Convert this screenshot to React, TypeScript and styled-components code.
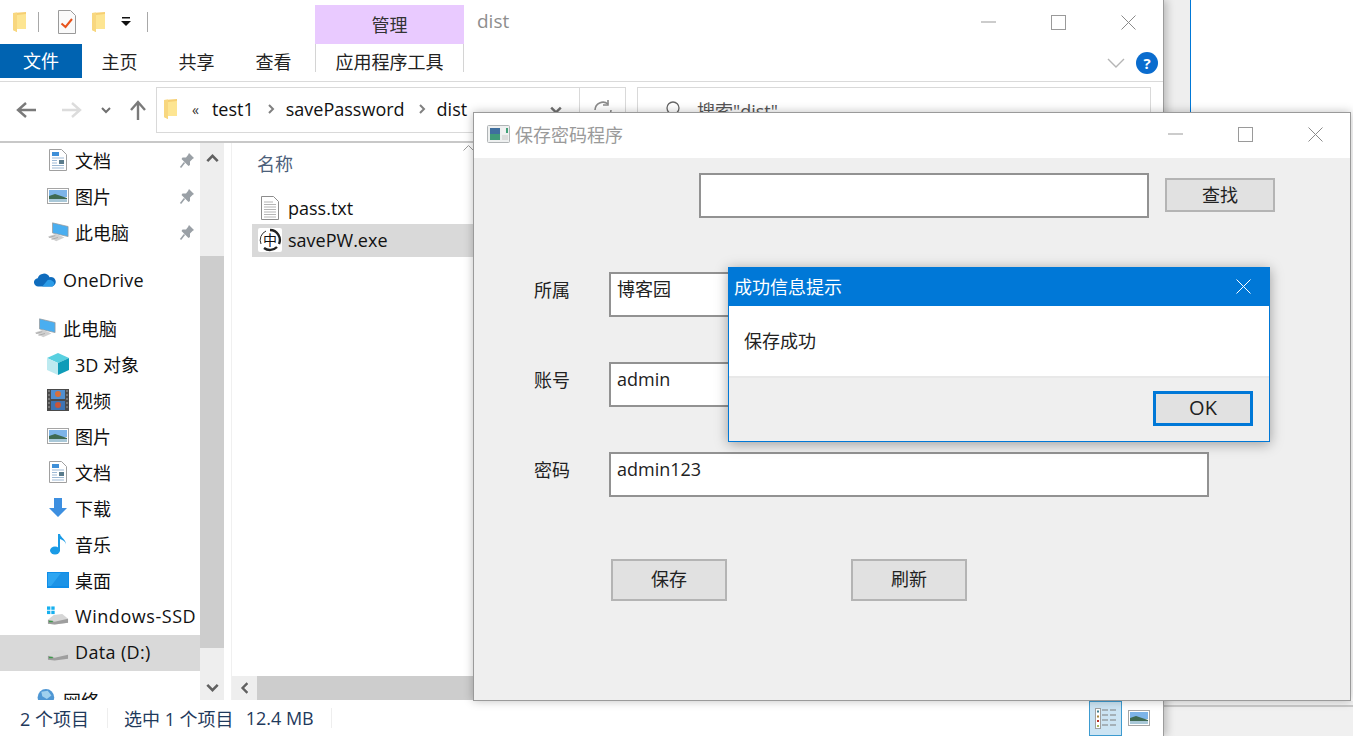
import styled, { createGlobalStyle } from "styled-components"
import type { ReactNode } from "react"

const GlobalStyle = createGlobalStyle`
  html, body {
    margin: 0;
    padding: 0;
    background: #fff;
    overflow: hidden;
  }
  * {
    box-sizing: border-box;
  }
  body {
    font-family: "Open Sans", "Noto Sans CJK SC", sans-serif;
    font-size: 18px;
    color: #111;
  }
`

const Desktop = styled.div`
  position: relative;
  width: 1353px;
  height: 736px;
  overflow: hidden;
  background: #fff;
`

/* windows on the desktop */
const BackWindow = styled.div`
  position: absolute;
  left: 1164px;
  top: 0;
  width: 189px;
  height: 736px;
  display: flex;
  flex-direction: column;
`

const BackTop = styled.div`
  height: 701px;
  display: flex;
`

const BackStrip = styled.div`
  width: 27px;
  background: #eeeeee;
  border-right: 1px solid #0078d7;
`

const BackGap = styled.div`
  height: 4px;
  background: #f3f3f3;
`

const BackBottom = styled.div`
  flex: 1;
  background: #f0f0f0;
  border-top: 2px solid #c9c9c9;
`

const Explorer = styled.div`
  position: absolute;
  left: 0;
  top: 0;
  width: 1164px;
  height: 736px;
  background: #fff;
  border-right: 1px solid #9c9c9c;
  box-shadow: 3px 0 8px rgba(0, 0, 0, 0.22);
  display: flex;
  flex-direction: column;
`

const TitleBar = styled.div`
  height: 44px;
  flex: none;
  display: flex;
  align-items: flex-end;
  padding-left: 12px;
`

const QuickAccess = styled.div`
  width: 303px;
  height: 44px;
  display: flex;
  align-items: center;
  padding-bottom: 1px;
`

const QuickSep = styled.div<{ $m: string }>`
  width: 1px;
  height: 20px;
  background: #a8a8a8;
  margin: ${(p) => p.$m};
`

const QuickSlot = styled.span<{ $ml: number }>`
  margin-left: ${(p) => p.$ml}px;
  display: inline-flex;
`

const ContextTab = styled.div`
  width: 149px;
  height: 39px;
  background: #e9caff;
  text-align: center;
  line-height: 40px;
  color: #333;
`

const TitleText = styled.div`
  align-self: center;
  margin-left: 13px;
  color: #8e8e8e;
  font-size: 19px;
  padding-bottom: 2px;
`

const WindowButtons = styled.div`
  margin-left: auto;
  align-self: center;
  display: flex;
  gap: 55px;
  padding-right: 27px;
  align-items: center;
`

const RibbonTabs = styled.div`
  height: 38px;
  flex: none;
  border-bottom: 1px solid #dadada;
  display: flex;
  align-items: flex-start;
`

const FileTab = styled.div`
  width: 82px;
  height: 34px;
  background: #0063b1;
  color: #fff;
  text-align: center;
  line-height: 34px;
`

const RibbonTab = styled.div`
  height: 34px;
  width: 77px;
  padding-right: 2px;
  text-align: center;
  line-height: 36px;
  color: #222;
`

const ToolTab = styled.div`
  width: 149px;
  height: 28px;
  margin-left: 2px;
  text-align: center;
  line-height: 36px;
  color: #222;
  border-left: 1px solid #d4d4d4;
  border-right: 1px solid #d4d4d4;
`

const RibbonRight = styled.div`
  margin-left: auto;
  display: flex;
  align-items: center;
  gap: 11px;
  height: 36px;
  padding-right: 5px;
  padding-top: 1px;
`

const HelpBadge = styled.div`
  width: 22px;
  height: 22px;
  border-radius: 50%;
  background: #0a6cce;
  color: #fff;
  font-size: 15px;
  font-weight: 700;
  text-align: center;
  line-height: 22px;
`

const NavBar = styled.div`
  height: 61px;
  flex: none;
  display: flex;
  align-items: flex-start;
  padding-top: 5px;
  border-bottom: 2px solid #c8c8c8;
`

const NavArrows = styled.div`
  width: 156px;
  height: 46px;
  display: flex;
  align-items: center;
  padding-left: 16px;
`

const NavSlot = styled.div<{ $w: number }>`
  width: ${(p) => p.$w}px;
  flex: none;
  display: flex;
  align-items: center;
`

const AddressBox = styled.div`
  width: 470px;
  height: 46px;
  border: 1px solid #d9d9d9;
  display: flex;
  align-items: center;
  padding-left: 6px;
  padding-bottom: 2px;
`

const Crumb = styled.span`
  color: #111;
  font-size: 18px;
  margin-right: 12px;
`

const CrumbRoot = styled.span`
  color: #333;
  font-size: 14px;
  margin: 0 13px 0 14px;
`

const CrumbArrow = styled.span`
  margin-right: 10px;
  display: inline-flex;
`

const AddressChevron = styled.span`
  margin-left: auto;
  width: 46px;
  display: inline-flex;
  justify-content: center;
  padding-top: 2px;
`

const RefreshSlot = styled.span`
  border-left: 1px solid #d9d9d9;
  height: 44px;
  margin-bottom: -2px;
  width: 46px;
  display: flex;
  align-items: center;
  justify-content: center;
`

const SearchBox = styled.div`
  margin-left: 11px;
  width: 514px;
  height: 46px;
  border: 1px solid #d9d9d9;
  display: flex;
  align-items: center;
  padding-left: 26px;
  gap: 13px;
  color: #555;
`

const Main = styled.div`
  flex: 1;
  display: flex;
  min-height: 0;
`

const Sidebar = styled.div`
  width: 200px;
  flex: none;
  overflow: hidden;
`

const NavGroup = styled.div`
  margin-bottom: 12px;
`

const NavItem = styled.div<{ $level?: number; $active?: boolean }>`
  height: 36px;
  display: flex;
  align-items: center;
  white-space: nowrap;
  padding-left: ${(p) => (p.$level === 1 ? 34 : 47)}px;
  padding-bottom: 2px;
  background: ${(p) => (p.$active ? "#d9d9d9" : "transparent")};
  position: relative;
`

const NavIcon = styled.span<{ $level?: number }>`
  width: 22px;
  margin-right: ${(p) => (p.$level === 1 ? 7 : 6)}px;
  display: inline-flex;
  flex: none;
  align-items: center;
  justify-content: center;
`

const NavLabel = styled.span<{ $track?: number }>`
  letter-spacing: ${(p) => p.$track ?? 0}px;
`

const NavPin = styled.span`
  position: absolute;
  left: 179px;
  top: 9px;
  display: inline-flex;
`

const VScroll = styled.div`
  width: 24px;
  flex: none;
  background: #eeeeee;
  display: flex;
  flex-direction: column;
`

const ScrollArrow = styled.div`
  height: 113px;
  display: flex;
  justify-content: center;
  align-items: flex-start;
  padding-top: 9px;
`

const ScrollThumb = styled.div`
  height: 392px;
  background: #cdcdcd;
`

const ScrollArrowDown = styled.div`
  flex: 1;
  display: flex;
  justify-content: center;
  align-items: flex-end;
  padding-bottom: 6px;
`

const PaneGap = styled.div`
  width: 8px;
  flex: none;
  border-right: 1px solid #f0f0f0;
  border-left: 3px solid #fff;
`

const FilePane = styled.div`
  flex: 1;
  display: flex;
  flex-direction: column;
  position: relative;
`

const SortCaret = styled.span`
  position: absolute;
  left: 231px;
  top: 2px;
  display: inline-flex;
`

const ColumnHeader = styled.div`
  height: 41px;
  padding: 7px 0 0 25px;
  color: #4c607a;
`

const FileList = styled.div`
  flex: 1;
  padding: 8px 0 0 20px;
`

const FileRow = styled.div<{ $selected?: boolean }>`
  height: ${(p) => (p.$selected ? 33 : 32)}px;
  display: flex;
  align-items: center;
  padding-left: 6px;
  padding-bottom: ${(p) => (p.$selected ? 1 : 0)}px;
  gap: 6px;
  background: ${(p) => (p.$selected ? "#d9d9d9" : "transparent")};
`

const FileIcon = styled.span`
  width: 24px;
  display: inline-flex;
  justify-content: center;
`

const HScroll = styled.div`
  height: 24px;
  background: #cdcdcd;
  display: flex;
  flex: none;
`

const HArrow = styled.div`
  width: 25px;
  background: #eeeeee;
  display: flex;
  align-items: center;
  justify-content: center;
`

const StatusBar = styled.div`
  height: 36px;
  flex: none;
  display: flex;
  align-items: center;
  font-size: 18px;
  color: #1f3a5c;
  padding-left: 20px;
`

const StatusSep = styled.div<{ $m: string }>`
  width: 1px;
  height: 20px;
  background: #eeeeee;
  margin: ${(p) => p.$m};
`

const StatusSize = styled.span`
  margin-left: 12px;
`

const ViewButtons = styled.div`
  margin-left: auto;
  display: flex;
  align-items: center;
  padding-right: 13px;
  gap: 6px;
`

const ViewButton = styled.div<{ $on?: boolean }>`
  width: ${(p) => (p.$on ? 33 : 22)}px;
  height: 35px;
  display: flex;
  align-items: center;
  justify-content: center;
  background: ${(p) => (p.$on ? "#cce4f3" : "transparent")};
  border: ${(p) => (p.$on ? "1px solid #3d9bd0" : "none")};
`

/* the small python program */
const AppWindow = styled.div`
  position: absolute;
  left: 473px;
  top: 112px;
  width: 878px;
  height: 589px;
  background: #efefef;
  border: 1px solid #9a9a9a;
  box-shadow: 0 0 9px rgba(0, 0, 0, 0.25);
  display: flex;
  flex-direction: column;
`

const AppTitleBar = styled.div`
  height: 45px;
  flex: none;
  background: #fff;
  display: flex;
  align-items: center;
  padding: 0 0 3px 13px;
  color: #9a9a9a;
  gap: 5px;
`

const AppButtons = styled.div`
  margin-left: auto;
  display: flex;
  align-items: center;
  gap: 55px;
  padding-right: 27px;
`

const AppBody = styled.div`
  flex: 1;
  display: flex;
  flex-direction: column;
  padding-top: 15px;
`

const SearchRow = styled.div`
  display: flex;
  align-items: center;
  padding-left: 225px;
  gap: 16px;
  margin-bottom: 54px;
`

const TextBox = styled.div<{ $w: number }>`
  width: ${(p) => p.$w}px;
  height: 45px;
  background: #fff;
  border: 2px solid #929292;
  padding: 3px 6px;
  font-size: 18px;
  color: #222;
  line-height: 24px;
`

const Button = styled.div<{ $w: number; $h: number }>`
  width: ${(p) => p.$w}px;
  height: ${(p) => p.$h}px;
  background: #e1e1e1;
  border: 2px solid #b4b4b4;
  display: flex;
  align-items: center;
  justify-content: center;
  padding-bottom: 4px;
  font-size: 18px;
  color: #222;
`

const SearchButton = styled(Button)`
  margin-top: -1px;
  padding-bottom: 3px;
`

const FieldRow = styled.div`
  display: flex;
  align-items: flex-start;
  padding-left: 60px;
  margin-bottom: 45px;
`

const FieldLabel = styled.div`
  width: 75px;
  font-size: 18px;
  line-height: 24px;
  padding-top: 6px;
  color: #222;
`

const ActionRow = styled.div`
  display: flex;
  padding-left: 137px;
  padding-top: 17px;
  gap: 124px;
`

/* message box on top */
const Dialog = styled.div`
  position: absolute;
  left: 728px;
  top: 267px;
  width: 542px;
  height: 175px;
  background: #fff;
  border: 1px solid #0078d7;
  box-shadow: 0 2px 12px rgba(0, 0, 0, 0.35);
  display: flex;
  flex-direction: column;
`

const DialogTitle = styled.div`
  height: 38px;
  flex: none;
  background: #0078d7;
  color: #fff;
  display: flex;
  align-items: center;
  justify-content: space-between;
  padding: 0 18px 2px 5px;
`

const DialogBody = styled.div`
  height: 72px;
  flex: none;
  padding: 23px 0 0 15px;
  font-size: 18px;
  line-height: 24px;
  color: #222;
  border-bottom: 2px solid #e8e8e8;
`

const DialogFooter = styled.div`
  flex: 1;
  background: #efefef;
  display: flex;
  justify-content: flex-end;
  align-items: flex-start;
  padding: 13px 16px 0 0;
`

const OkButton = styled.div`
  width: 100px;
  height: 35px;
  background: #e1e1e1;
  border: 3px solid #0078d7;
  display: flex;
  align-items: center;
  justify-content: center;
  padding-bottom: 2px;
  font-size: 20px;
  color: #222;
`

const Turned = styled.svg<{ $rot: number }>`
  transform: rotate(${(p) => p.$rot}deg);
`

/* drawings */
const FolderIcon = () => (
  <svg width="15" height="22" viewBox="0 0 15 22">
    <path d="M1 2 L14 1 V18 L5 18 L5 21 L1 19 Z" fill="#f6cf72" />
    <path d="M5 4 L14 3 V18 L5 18 Z" fill="#fde592" />
    <path d="M1 2 L5 1.5 V21 L1 19 Z" fill="#f8d77f" />
  </svg>
)

const CheckDocIcon = () => (
  <svg width="18" height="24" viewBox="0 0 18 24">
    <path d="M.5.5h12l5 5v18H.5z" fill="#fafafa" stroke="#9a9a9a" />
    <path d="M3.5 13.5 L7.5 17 L14 9" fill="none" stroke="#e8541c" strokeWidth="2" />
  </svg>
)

const MiniArrow = () => (
  <svg width="10" height="10" viewBox="0 0 10 10">
    <rect x="1" y="0" width="8" height="1.5" fill="#111" />
    <path d="M0 4h10L5 9z" fill="#111" />
  </svg>
)

const MinIcon = () => (
  <svg width="15" height="2" viewBox="0 0 15 2">
    <rect width="15" height="1" y="0.5" fill="#9a9a9a" />
  </svg>
)

const MaxIcon = () => (
  <svg width="15" height="15" viewBox="0 0 15 15">
    <rect x="0.5" y="0.5" width="14" height="14" fill="none" stroke="#9a9a9a" />
  </svg>
)

const CloseIcon = ({ color = "#8a8a8a" }: { color?: string }) => (
  <svg width="15" height="15" viewBox="0 0 15 15">
    <path d="M.5.5l14 14M14.5.5l-14 14" stroke={color} strokeWidth="1" fill="none" />
  </svg>
)

const NavArrow = ({ dir, color }: { dir: "left" | "right" | "up"; color: string }) => {
  const rot = dir === "left" ? 180 : dir === "up" ? -90 : 0
  return (
    <Turned $rot={rot} width="20" height="20" viewBox="0 0 20 20">
      <path d="M0 10h18M10 3l8 7-8 7" fill="none" stroke={color} strokeWidth="2.4" />
    </Turned>
  )
}

const SmallChevron = ({ dir = "down", color = "#707070", size = 10 }: { dir?: "down" | "up" | "left" | "right"; color?: string; size?: number }) => {
  const rot = { down: 0, up: 180, left: 90, right: -90 }[dir]
  return (
    <Turned $rot={rot} width={size} height={size} viewBox="0 0 10 10">
      <path d="M1 3l4 4 4-4" fill="none" stroke={color} strokeWidth="2" />
    </Turned>
  )
}

const WideChevron = () => (
  <svg width="18" height="10" viewBox="0 0 18 10">
    <path d="M1 1l8 8 8-8" fill="none" stroke="#b5b5b5" strokeWidth="1.4" />
  </svg>
)

const ThinCaret = () => (
  <svg width="11" height="6" viewBox="0 0 11 6">
    <path d="M.5 5.5l5-5 5 5" fill="none" stroke="#9a9a9a" />
  </svg>
)

const RefreshIcon = () => (
  <svg width="22" height="22" viewBox="0 0 22 22">
    <path d="M3 11a8 8 0 0 1 13-6M19 11a8 8 0 0 1-13 6" fill="none" stroke="#8a8a8a" strokeWidth="1.6" />
    <path d="M16 1v5h-5M6 21v-5h5" fill="none" stroke="#8a8a8a" strokeWidth="1.6" />
  </svg>
)

const SearchGlass = () => (
  <svg width="20" height="20" viewBox="0 0 20 20">
    <circle cx="9" cy="8" r="6" fill="none" stroke="#666" strokeWidth="1.3" />
    <path d="M13 13l5 5" stroke="#666" strokeWidth="1.5" />
  </svg>
)

const DocIcon = () => (
  <svg width="18" height="22" viewBox="0 0 18 22">
    <path d="M.5.5h12l5 5v16H.5z" fill="#fff" stroke="#a0a0a0" />
    <rect x="3" y="3" width="7" height="4" fill="#3e8fd8" />
    <path d="M3 9h12M3 11.5h5M3 14h5M3 16.5h12M3 19h12" stroke="#9db9d5" />
    <rect x="10" y="11" width="5" height="4" fill="#5a7c8c" />
  </svg>
)

const PictureIcon = () => (
  <svg width="22" height="16" viewBox="0 0 22 16">
    <rect x="0.5" y="0.5" width="21" height="15" fill="#fff" stroke="#a5a5a5" />
    <rect x="2" y="2" width="18" height="7" fill="#7db4e8" />
    <path d="M2 8l6-2 12 4v4H2z" fill="#3f6a52" />
    <rect x="2" y="11" width="18" height="3" fill="#a9c8d8" />
  </svg>
)

const PcIcon = () => (
  <svg width="24" height="22" viewBox="0 0 24 22">
    <path d="M6 1l17 4v11L6 12z" fill="#4aaef0" stroke="#9a9a9a" strokeWidth="0.8" />
    <path d="M1 16l9-3 9 4-9 4z" fill="#d0d0d0" />
    <path d="M2 17l7-2M5 19l7-2" stroke="#a8a8a8" />
  </svg>
)

const CloudIcon = () => (
  <svg width="24" height="16" viewBox="0 0 24 16">
    <path d="M5 15a4.5 4.5 0 0 1-1-9 7 7 0 0 1 13-1 5 5 0 0 1 3 10z" fill="#0f6cbd" />
    <path d="M9 15l6-7a5 5 0 0 1 5 1 3.2 3.2 0 0 1 0 6z" fill="#2b9ce8" />
  </svg>
)

const CubeIcon = () => (
  <svg width="22" height="22" viewBox="0 0 22 22">
    <path d="M11 0l11 5-11 5L0 5z" fill="#58d0e0" />
    <path d="M0 5l11 5v12L0 17z" fill="#bdeaf0" />
    <path d="M22 5l-11 5v12l11-5z" fill="#0f9cb8" />
  </svg>
)

const FilmIcon = () => (
  <svg width="22" height="22" viewBox="0 0 22 22">
    <rect width="22" height="22" fill="#4a4a4a" />
    <rect x="4" y="1" width="14" height="9" fill="#4f8fd0" />
    <rect x="4" y="12" width="14" height="9" fill="#3d74b4" />
    <circle cx="11" cy="5" r="3" fill="#d8703a" />
    <circle cx="11" cy="16" r="3" fill="#c9563a" />
    <path d="M1.5 2h1M1.5 6h1M1.5 10h1M1.5 14h1M1.5 18h1M19.5 2h1M19.5 6h1M19.5 10h1M19.5 14h1M19.5 18h1" stroke="#fff" />
  </svg>
)

const DownloadIcon = () => (
  <svg width="20" height="20" viewBox="0 0 20 20">
    <path d="M6 0h8v10h5l-9 9-9-9h5z" fill="#3d8fe0" />
  </svg>
)

const MusicIcon = () => (
  <svg width="18" height="22" viewBox="0 0 18 22">
    <ellipse cx="6" cy="17.5" rx="5" ry="4" fill="#1a9be6" />
    <path d="M9 18V1h2c1 4 6 5 6 11 0-3-3-5-6-6v12z" fill="#1a9be6" />
  </svg>
)

const DesktopIcon = () => (
  <svg width="22" height="16" viewBox="0 0 22 16">
    <rect width="22" height="16" fill="#0f8de8" />
    <rect x="1" y="1" width="20" height="13" fill="#2ea6f2" />
    <path d="M14 1l-10 13h17V1z" fill="#1c93e6" />
  </svg>
)

const DriveIcon = ({ win }: { win?: boolean }) => (
  <svg width="23" height="20" viewBox="0 0 23 20">
    {win && (
      <g fill="#17b0ef">
        <rect x="0" y="0" width="3.5" height="3.5" />
        <rect x="4.5" y="0" width="3.5" height="3.5" />
        <rect x="0" y="4.5" width="3.5" height="3.5" />
        <rect x="4.5" y="4.5" width="3.5" height="3.5" />
      </g>
    )}
    <path d="M1 14l6-5 9-1 6 5v4l-14 2-7-1z" fill="#d6d6d6" />
    <path d="M1 14l7 2 14-3v4l-14 2-7-1z" fill="#9e9e9e" />
    <rect x="2" y="15" width="4" height="1.5" fill="#3d9a4a" />
  </svg>
)

const GlobeIcon = () => (
  <svg width="24" height="24" viewBox="0 0 24 24">
    <circle cx="13" cy="9" r="9" fill="#4f97d4" />
    <path d="M8 3l7-1 4 5-5 4-5-3z" fill="#9fd0ee" />
    <path d="M1 15l9-3 9 4-9 4z" fill="#d0d0d0" />
  </svg>
)

const PinIcon = () => (
  <svg width="16" height="17" viewBox="0 0 16 17">
    <path d="M10 1l5 5-1.5 1L11 9.5V13l-1.5 1-7-7 1-1.5H7L9 3z" fill="#9aa0a6" />
    <path d="M5.5 10.5l-4 5" stroke="#9aa0a6" strokeWidth="1.6" />
  </svg>
)

const TxtIcon = () => (
  <svg width="18" height="24" viewBox="0 0 18 24">
    <path d="M.5.5h12l5 5v18H.5z" fill="#fff" stroke="#8d8d8d" />
    <path d="M3 6h9M3 8.5h12M3 11h12M3 13.5h12M3 16h12M3 18.5h12M3 21h12" stroke="#b5b5b5" />
  </svg>
)

const ExeGlyph = styled.text`
  font-family: "Noto Sans CJK SC", sans-serif;
  font-size: 14px;
  fill: #111;
`

const ExeIcon = () => (
  <svg width="24" height="24" viewBox="0 0 24 24">
    <rect width="24" height="24" rx="2" fill="#fff" />
    <path d="M12 2a10 10 0 0 1 9 14M19 19a10 10 0 0 1-13 1" fill="none" stroke="#222" strokeWidth="2.4" />
    <path d="M3 16a10 10 0 0 1 5-13" fill="none" stroke="#333" strokeWidth="1" />
    <ExeGlyph x="5" y="17">中</ExeGlyph>
  </svg>
)

const AppIcon = () => (
  <svg width="23" height="18" viewBox="0 0 23 18">
    <rect x="0.5" y="0.5" width="22" height="17" rx="1" fill="#eef0f0" stroke="#b0b4b6" />
    <rect x="3" y="3" width="10" height="12" fill="#3f9a78" />
    <rect x="3" y="3" width="10" height="6" fill="#3f6f9e" />
    <rect x="15" y="3" width="3" height="6" fill="#f2f2f2" />
    <rect x="19" y="3" width="2" height="5" fill="#42a078" />
    <rect x="15" y="10" width="6" height="5" fill="#dcdcdc" />
  </svg>
)

const DetailsIcon = () => (
  <svg width="21" height="21" viewBox="0 0 21 21">
    <rect x="0.5" y="0.5" width="5" height="20" fill="#fff" stroke="#a0a0a0" />
    <rect x="2" y="2.5" width="2" height="2" fill="#41808f" />
    <rect x="2" y="7.5" width="2" height="2" fill="#a8863f" />
    <rect x="2" y="12" width="2" height="2" fill="#b83228" />
    <rect x="2" y="17" width="2" height="2" fill="#a8b860" />
    <path d="M7 2h6M15 2h6M7 7h6M15 7h6M7 12h6M15 12h6M7 17h6M15 17h6" stroke="#7f7f7f" strokeWidth="1.2" />
  </svg>
)

interface SideEntry {
  label: string
  icon: ReactNode
  level?: number
  pinned?: boolean
  active?: boolean
  track?: number
}

const quickLinks: SideEntry[] = [
  { label: "文档", icon: <DocIcon />, pinned: true },
  { label: "图片", icon: <PictureIcon />, pinned: true },
  { label: "此电脑", icon: <PcIcon />, pinned: true },
]

const computerLinks: SideEntry[] = [
  { label: "此电脑", icon: <PcIcon />, level: 1 },
  { label: "3D 对象", icon: <CubeIcon /> },
  { label: "视频", icon: <FilmIcon /> },
  { label: "图片", icon: <PictureIcon /> },
  { label: "文档", icon: <DocIcon /> },
  { label: "下载", icon: <DownloadIcon /> },
  { label: "音乐", icon: <MusicIcon /> },
  { label: "桌面", icon: <DesktopIcon /> },
  { label: "Windows-SSD", icon: <DriveIcon win />, track: 0.55 },
  { label: "Data (D:)", icon: <DriveIcon />, active: true, track: 0.35 },
]

const SideRow = ({ item }: { item: SideEntry }) => (
  <NavItem $level={item.level} $active={item.active}>
    <NavIcon $level={item.level}>{item.icon}</NavIcon>
    <NavLabel $track={item.track}>{item.label}</NavLabel>
    {item.pinned && (
      <NavPin>
        <PinIcon />
      </NavPin>
    )}
  </NavItem>
)

export default function App() {
  return (
    <Desktop>
      <GlobalStyle />
      <BackWindow>
        <BackTop>
          <BackStrip />
        </BackTop>
        <BackGap />
        <BackBottom />
      </BackWindow>

      <Explorer>
        <TitleBar>
          <QuickAccess>
            <FolderIcon />
            <QuickSep $m="0 0 0 11px" />
            <QuickSlot $ml={19}>
              <CheckDocIcon />
            </QuickSlot>
            <QuickSlot $ml={15}>
              <FolderIcon />
            </QuickSlot>
            <QuickSlot $ml={15}>
              <MiniArrow />
            </QuickSlot>
            <QuickSep $m="0 0 0 16px" />
          </QuickAccess>
          <ContextTab>管理</ContextTab>
          <TitleText>dist</TitleText>
          <WindowButtons>
            <MinIcon />
            <MaxIcon />
            <CloseIcon />
          </WindowButtons>
        </TitleBar>

        <RibbonTabs>
          <FileTab>文件</FileTab>
          <RibbonTab>主页</RibbonTab>
          <RibbonTab>共享</RibbonTab>
          <RibbonTab>查看</RibbonTab>
          <ToolTab>应用程序工具</ToolTab>
          <RibbonRight>
            <WideChevron />
            <HelpBadge>?</HelpBadge>
          </RibbonRight>
        </RibbonTabs>

        <NavBar>
          <NavArrows>
            <NavSlot $w={46}>
              <NavArrow dir="left" color="#7a7a7a" />
            </NavSlot>
            <NavSlot $w={39}>
              <NavArrow dir="right" color="#dcdcdc" />
            </NavSlot>
            <NavSlot $w={27}>
              <SmallChevron />
            </NavSlot>
            <NavSlot $w={20}>
              <NavArrow dir="up" color="#7a7a7a" />
            </NavSlot>
          </NavArrows>
          <AddressBox>
            <FolderIcon />
            <CrumbRoot>«</CrumbRoot>
            <Crumb>test1</Crumb>
            <CrumbArrow>
              <SmallChevron dir="right" color="#808080" />
            </CrumbArrow>
            <Crumb>savePassword</Crumb>
            <CrumbArrow>
              <SmallChevron dir="right" color="#808080" />
            </CrumbArrow>
            <Crumb>dist</Crumb>
            <AddressChevron>
              <SmallChevron size={12} />
            </AddressChevron>
            <RefreshSlot>
              <RefreshIcon />
            </RefreshSlot>
          </AddressBox>
          <SearchBox>
            <SearchGlass />
            搜索"dist"
          </SearchBox>
        </NavBar>

        <Main>
          <Sidebar>
            <NavGroup>
              {quickLinks.map((item) => (
                <SideRow key={item.label} item={item} />
              ))}
            </NavGroup>
            <NavGroup>
              <SideRow item={{ label: "OneDrive", icon: <CloudIcon />, level: 1, track: 0.2 }} />
            </NavGroup>
            <NavGroup>
              {computerLinks.map((item) => (
                <SideRow key={item.label + item.level} item={item} />
              ))}
            </NavGroup>
            <SideRow item={{ label: "网络", icon: <GlobeIcon />, level: 1 }} />
          </Sidebar>
          <VScroll>
            <ScrollArrow>
              <SmallChevron dir="up" color="#606060" size={13} />
            </ScrollArrow>
            <ScrollThumb />
            <ScrollArrowDown>
              <SmallChevron color="#606060" size={13} />
            </ScrollArrowDown>
          </VScroll>
          <PaneGap />
          <FilePane>
            <SortCaret>
              <ThinCaret />
            </SortCaret>
            <ColumnHeader>名称</ColumnHeader>
            <FileList>
              <FileRow>
                <FileIcon>
                  <TxtIcon />
                </FileIcon>
                pass.txt
              </FileRow>
              <FileRow $selected>
                <FileIcon>
                  <ExeIcon />
                </FileIcon>
                savePW.exe
              </FileRow>
            </FileList>
            <HScroll>
              <HArrow>
                <SmallChevron dir="left" color="#606060" size={12} />
              </HArrow>
            </HScroll>
          </FilePane>
        </Main>

        <StatusBar>
          2 个项目
          <StatusSep $m="0 16px 0 18px" />
          选中 1 个项目
          <StatusSize>12.4 MB</StatusSize>
          <StatusSep $m="0 0 0 17px" />
          <ViewButtons>
            <ViewButton $on>
              <DetailsIcon />
            </ViewButton>
            <ViewButton>
              <PictureIcon />
            </ViewButton>
          </ViewButtons>
        </StatusBar>
      </Explorer>

      <AppWindow>
        <AppTitleBar>
          <AppIcon />
          保存密码程序
          <AppButtons>
            <MinIcon />
            <MaxIcon />
            <CloseIcon />
          </AppButtons>
        </AppTitleBar>
        <AppBody>
          <SearchRow>
            <TextBox $w={450} />
            <SearchButton $w={110} $h={34}>查找</SearchButton>
          </SearchRow>
          <FieldRow>
            <FieldLabel>所属</FieldLabel>
            <TextBox $w={600}>博客园</TextBox>
          </FieldRow>
          <FieldRow>
            <FieldLabel>账号</FieldLabel>
            <TextBox $w={600}>admin</TextBox>
          </FieldRow>
          <FieldRow>
            <FieldLabel>密码</FieldLabel>
            <TextBox $w={600}>admin123</TextBox>
          </FieldRow>
          <ActionRow>
            <Button $w={116} $h={42}>保存</Button>
            <Button $w={116} $h={42}>刷新</Button>
          </ActionRow>
        </AppBody>
      </AppWindow>

      <Dialog>
        <DialogTitle>
          成功信息提示
          <CloseIcon color="#fff" />
        </DialogTitle>
        <DialogBody>保存成功</DialogBody>
        <DialogFooter>
          <OkButton>OK</OkButton>
        </DialogFooter>
      </Dialog>
    </Desktop>
  )
}
